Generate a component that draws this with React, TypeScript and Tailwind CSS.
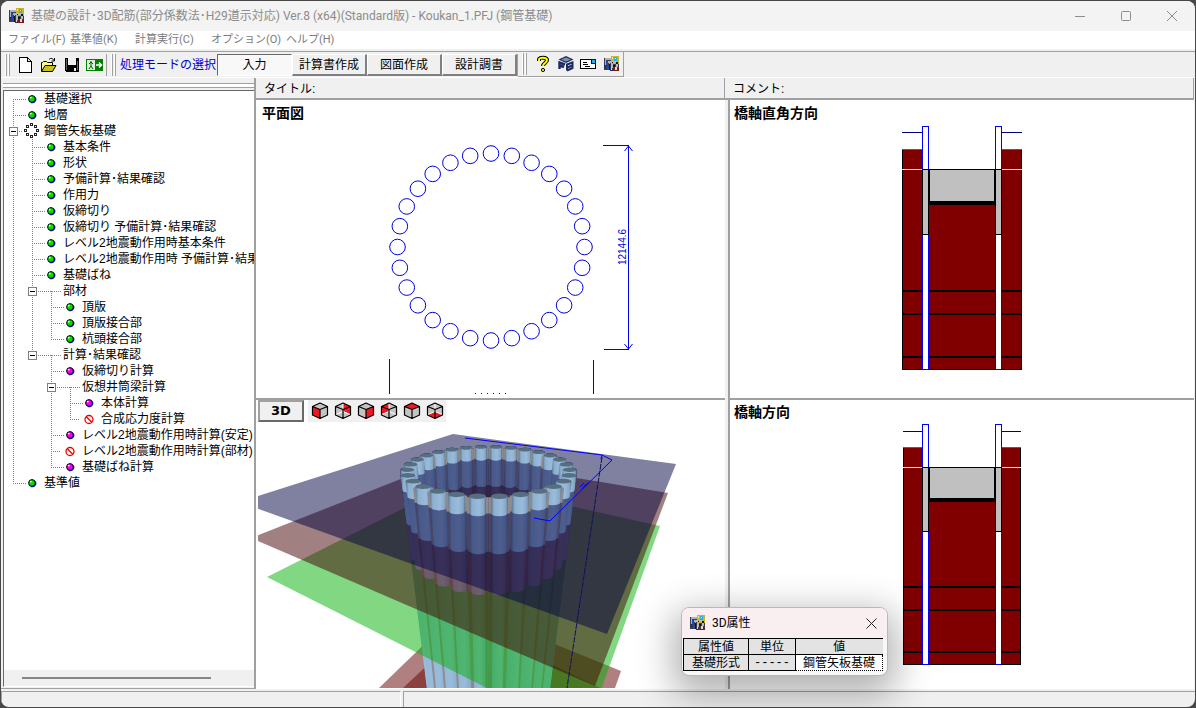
import { ReactNode } from "react";

const FONT = "font-['Liberation_Sans','Noto_Sans_CJK_JP',sans-serif]";
const UI_FONT = "font-[Roboto,'Noto_Sans_CJK_JP',sans-serif]";

type IconKind = "green" | "purple" | "ban" | "ring" | "none";

interface Row {
  guides: string; // one character per tree column
  icon: IconKind;
  label: string;
}

const rows: Row[] = [
  { guides: "r", icon: "green", label: "基礎選択" },
  { guides: "t", icon: "green", label: "地層" },
  { guides: "b", icon: "ring", label: "鋼管矢板基礎" },
  { guides: "|t", icon: "green", label: "基本条件" },
  { guides: "|t", icon: "green", label: "形状" },
  { guides: "|t", icon: "green", label: "予備計算･結果確認" },
  { guides: "|t", icon: "green", label: "作用力" },
  { guides: "|t", icon: "green", label: "仮締切り" },
  { guides: "|t", icon: "green", label: "仮締切り 予備計算･結果確認" },
  { guides: "|t", icon: "green", label: "レベル2地震動作用時基本条件" },
  { guides: "|t", icon: "green", label: "レベル2地震動作用時 予備計算･結果確認" },
  { guides: "|t", icon: "green", label: "基礎ばね" },
  { guides: "|b", icon: "none", label: "部材" },
  { guides: "||t", icon: "green", label: "頂版" },
  { guides: "||t", icon: "green", label: "頂版接合部" },
  { guides: "||l", icon: "green", label: "杭頭接合部" },
  { guides: "|B", icon: "none", label: "計算･結果確認" },
  { guides: "| t", icon: "purple", label: "仮締切り計算" },
  { guides: "| b", icon: "none", label: "仮想井筒梁計算" },
  { guides: "| |t", icon: "purple", label: "本体計算" },
  { guides: "| |l", icon: "ban", label: "合成応力度計算" },
  { guides: "| t", icon: "purple", label: "レベル2地震動作用時計算(安定)" },
  { guides: "| t", icon: "ban", label: "レベル2地震動作用時計算(部材)" },
  { guides: "| l", icon: "purple", label: "基礎ばね計算" },
  { guides: "l", icon: "green", label: "基準値" },
];

// dotted connector lines of one tree column
function Guide({ kind }: { kind: string }) {
  const top = "|tlbB".includes(kind);
  const bottom = "|trb".includes(kind);
  const side = "tlrbB".includes(kind);
  const box = "bB".includes(kind);
  return (
    <svg width="19" height="16" className="shrink-0" shapeRendering="crispEdges">
      <g stroke="#808080" strokeDasharray="1 1">
        {top && <path d="M9.5 0V8" />}
        {bottom && <path d="M9.5 8V16" />}
        {side && <path d="M9 8.5H19" />}
      </g>
      {box && (
        <>
          <rect x="5.5" y="4.5" width="8" height="8" fill="#fff" stroke="#808080" />
          <path d="M7 8.5H12" stroke="#000" />
        </>
      )}
    </svg>
  );
}

function TreeIcon({ kind }: { kind: IconKind }) {
  return (
    <svg width="19" height="16" className="shrink-0">
      {kind === "none" && (
        <path d="M0 8.5H19M9.5 8V16" stroke="#808080" strokeDasharray="1 1" shapeRendering="crispEdges" />
      )}
      {(kind === "green" || kind === "purple") && (
        <>
          <path d="M0 8.5H3" stroke="#808080" strokeDasharray="1 1" shapeRendering="crispEdges" />
          <circle cx="9" cy="8" r="3.4" fill={kind === "green" ? "#00e000" : "#f000f0"} stroke="#000" />
          <path d="M12.4 6.5a3.6 3.6 0 0 1-4.6 4.8" fill="none" stroke="#000090" strokeWidth="1.4" />
          <circle cx="7.8" cy="6.6" r=".9" fill="#fff" />
        </>
      )}
      {kind === "ban" && (
        <g stroke="#f00000" strokeWidth="1.3" fill="none">
          <circle cx="9" cy="8.5" r="4" />
          <path d="M6.2 5.7L11.8 11.3" />
        </g>
      )}
      {kind === "ring" && (
        <g fill="#fff" stroke="#222" shapeRendering="crispEdges">
          {[[8, 1], [12, 3], [14, 7], [12, 11], [8, 13], [4, 11], [2, 7], [4, 3]].map(([x, y]) => (
            <rect key={`${x}-${y}`} x={x - 0.5} y={y - 0.5} width="2" height="2" />
          ))}
        </g>
      )}
    </svg>
  );
}

function AppIcon() {
  return (
    <svg width="16" height="16" viewBox="0 0 16 16" className="shrink-0" shapeRendering="crispEdges">
      <rect x="0" y="2" width="15" height="12" fill="#3c3c44" />
      <path d="M7 0h8v8h-8z" fill="#c8b428" />
      <path d="M10 1h3v4h-3z" fill="#30b0e0" />
      <path d="M11 2h1v1h-1zM8 1h1v2h-1z" fill="#fff080" />
      <path d="M1 2h6v2h-6zM4 5h2v2h-2zM1 4h1v5h-1z" fill="#b0b0b8" />
      <path d="M2 5h2v4h-2zM3 10h2v4h-2z" fill="#1848d0" />
      <path d="M6 5h6v2h-6zM7 8h2v4h-2zM12 8h2v3h-2zM5 7h1v1h-1z" fill="#b8b8c4" />
      <path d="M9 9h2v2h-2zM5 8h1v6h-1zM8 6h1v1h-1zM12 6h2v2h-2z" fill="#111" />
      <path d="M9 12h6v3h-6z" fill="#801818" />
      <path d="M11 11h2v3h-2zM7 12h1v2h-1z" fill="#d8d8e0" />
      <path d="M0 9h2v3h-2zM6 14h3v1h-3z" fill="#203070" />
    </svg>
  );
}

function Grip() {
  return (
    <div className="flex h-[22px] gap-px px-1">
      <div className="w-[2px] border-r border-[#a0a0a0] bg-white" />
      <div className="w-[2px] border-r border-[#a0a0a0] bg-white" />
    </div>
  );
}

function ToolButton({ label, children }: { label: string; children: ReactNode }) {
  return (
    <button aria-label={label} className="flex h-[22px] w-[23px] items-center justify-center">
      {children}
    </button>
  );
}

function ModeButton({ label, active }: { label: string; active?: boolean }) {
  return (
    <button
      className={
        active
          ? "h-[22px] w-[75px] border border-b-white border-l-[#696969] border-r-white border-t-[#696969] bg-[#f8f8f8] leading-5"
          : "h-[22px] w-[75px] border border-b-2 border-r-2 border-b-[#808080] border-l-white border-r-[#808080] border-t-white bg-[#f0f0f0] leading-5"
      }
    >
      {label}
    </button>
  );
}

function Toolbar() {
  return (
    <div className="flex h-[27px] shrink-0 items-center border-b border-t border-b-white border-t-[#a0a0a0] text-[12px]">
      <div className="flex items-center border-r border-[#a0a0a0]">
        <Grip />
        <ToolButton label="新規作成">
          <svg width="16" height="16" fill="#fff" stroke="#000" shapeRendering="crispEdges">
            <path d="M1.5 .5h8l4 4v11h-12zM9.5 .5v4h4" />
          </svg>
        </ToolButton>
        <ToolButton label="開く">
          <svg width="17" height="16" stroke="#000">
            <path d="M1.5 14V5.5h1l1-1h3l1 1h5V8" fill="#ffff80" />
            <path d="M1.5 14.5L5 8.5H16L12.5 14.5z" fill="#c8c020" />
            <path d="M9 2.500c2-2 4-1 5 1M14.500 1v3h-3" fill="none" />
          </svg>
        </ToolButton>
        <ToolButton label="保存">
          <svg width="16" height="16" shapeRendering="crispEdges">
            <path d="M1 1h14v14h-13l-1-1z" fill="#000" />
            <path d="M4 1h8v7h-8zM10 11h2v3h-2z" fill="#f0f0f0" />
            <path d="M2 2h1v11h-1zM13 4h1v9h-1z" fill="#606060" />
          </svg>
        </ToolButton>
        <ToolButton label="終了">
          <svg width="17" height="12">
            <path d="M0 0h17v12h-17z" fill="#008000" />
            <path d="M1 1h8v10h-8z" fill="#d8f0d8" />
            <path d="M5 2v5M3 5l2-2 2 2M3 10l2-3 2 3" stroke="#006000" fill="none" />
            <path d="M10 6h5M13 3.500L15.500 6L13 8.500" stroke="#fff" strokeWidth="1.500" fill="none" />
          </svg>
        </ToolButton>
      </div>
      <div className="flex items-center border-r border-[#a0a0a0]">
        <Grip />
        <span className="w-[97px] whitespace-nowrap text-[#0000c8]">処理モードの選択</span>
        <ModeButton label="入力" active />
        <ModeButton label="計算書作成" />
        <ModeButton label="図面作成" />
        <ModeButton label="設計調書" />
      </div>
      <div className="flex h-[25px] items-center border-b border-r border-[#a0a0a0]">
        <Grip />
        <ToolButton label="ヘルプ">
          <svg width="14" height="18" fill="none">
            <path d="M3 6V4.500C3 2 11 2 11 5c0 3-4 3-4 6" stroke="#000" strokeWidth="4" />
            <path d="M3 6V4.500C3 2 11 2 11 5c0 3-4 3-4 6" stroke="#ffff00" strokeWidth="2" />
            <circle cx="7" cy="15" r="1.600" fill="#ffff00" stroke="#000" />
          </svg>
        </ToolButton>
        <ToolButton label="FORUM8">
          <svg width="16" height="16">
            <path d="M8 0L15.500 3.500L8 7L.5 3.500z" fill="#1c2c60" />
            <path d="M3 3.500L8 1.500L13 3.500L8 5.500z" fill="#8090b0" />
            <path d="M1.500 13V6.500L7 8.500M1.500 9.500L6 11" stroke="#1c2c60" strokeWidth="2.400" fill="none" />
            <path d="M9 14.500V8.500L14.500 6.500V12L9 14.500M9 11.500L14.500 9.500" stroke="#1c2c60" strokeWidth="2" fill="none" />
          </svg>
        </ToolButton>
        <ToolButton label="問い合わせ">
          <svg width="17" height="12" shapeRendering="crispEdges">
            <rect x=".5" y="1.500" width="15" height="9" fill="#fff" stroke="#000" />
            <path d="M3 4.500h4M3 6.500h5M5 8.500h5" stroke="#000" />
            <rect x="11.500" y="1.500" width="4" height="4" fill="#20b0f0" stroke="#0000a0" />
          </svg>
        </ToolButton>
        <ToolButton label="バージョン情報">
          <AppIcon />
        </ToolButton>
      </div>
    </div>
  );
}

function PlanDrawing() {
  const count = 28;
  const piles = Array.from({ length: count }, (_, i) => {
    const a = (i * 2 * Math.PI) / count;
    return { x: 150 + 93.5 * Math.sin(a), y: 107 - 93.5 * Math.cos(a) };
  });
  return (
    <svg width="300" height="254" className="shrink-0" fill="none" stroke="#0000e0">
      {piles.map((p, i) => (
        <circle key={i} cx={p.x} cy={p.y} r="7.8" />
      ))}
      <g shapeRendering="crispEdges">
        <path d="M262 5.500H288M263 209.500H288M287.500 5V210" />
        <path d="M48.500 219V254M252.500 220V254" />
        <path d="M134 253.500H167" strokeDasharray="1 5" />
      </g>
      <path d="M283.500 11L287.500 6L291.500 11M283.500 204L287.500 209L291.500 204" />
      <text
        transform="translate(285 107) rotate(-90)"
        textAnchor="middle"
        fill="#0000e0"
        stroke="none"
        className="font-['Liberation_Sans',sans-serif] text-[10px]"
      >
        12144.6
      </text>
    </svg>
  );
}

interface ElevationProps {
  left: number;
  right: number;
  water: number;
  ground: number;
  bed: number;
  slab: number;
  joint: number;
  layers: number[];
  bottom: number;
}

function Elevation({ left, right, water, ground, bed, slab, joint, layers, bottom }: ElevationProps) {
  return (
    <svg width="120" height="245" className="shrink-0" shapeRendering="crispEdges" fill="none">
      <rect x={left + 0.5} y={ground + 0.5} width={right - left - 1} height={bottom - ground - 1} fill="#800000" stroke="#000" />
      <rect x="20" y={ground} width="80" height={bed - ground} fill="#fff" />
      <path d={`M${left} ${water + 0.5}H20M100 ${water + 0.5}H${right}`} stroke="#000080" />
      <path d={`M${left} ${ground + 0.5}H20M100 ${ground + 0.5}H${right}`} stroke="#e000e0" />
      <path d={`M${left} ${bed + 0.5}H20M100 ${bed + 0.5}H${right}`} stroke="#ffff00" />
      {layers.map(y => (
        <path key={y} d={`M${left} ${y + 1}H${right}`} stroke="#000" strokeWidth="2" />
      ))}
      <rect x="27" y={bed} width="66" height={slab - bed + 4} fill="#000" />
      <rect x="28" y={bed + 1} width="64" height={slab - bed - 1} fill="#c0c0c0" />
      {[20, 93].map(x => (
        <g key={x}>
          <rect x={x + 0.5} y=".5" width="6" height={bottom - 1} fill="#fff" stroke="#0000ff" />
          <rect x={x + 0.5} y={bed + 0.5} width="6" height={joint - bed} fill="#c0c0c0" stroke="#000" />
        </g>
      ))}
    </svg>
  );
}

const CX = 488.5;

// steel pipes sorted from back to front
const pipes = Array.from({ length: 28 }, (_, i) => {
  const a = ((i + 0.5) * 2 * Math.PI) / 28;
  const p = 1 / (1 - 0.189 * Math.sin(a));
  return { x: CX + 80 * Math.cos(a) * p, y: 467 + 23.9 * Math.sin(a) * p, p, w: 6.9 * p };
}).sort((a, b) => a.y - b.y);

function Pipes({ depth }: { depth: number }) {
  return (
    <g>
      {pipes.map((t, i) => {
        const dy = depth * t.p;
        const f = 1 - 0.0014 * dy;
        const bx = CX + (t.x - CX) * f;
        const bw = t.w * f;
        const by = t.y + dy;
        const ry = t.w * 0.32;
        return (
          <g key={i}>
            {Math.abs(t.x - CX) < 70 && (
              <path
                d={`M${t.x - t.w * 1.3} ${t.y + 1}H${t.x + t.w * 1.3}L${bx + bw * 1.3} ${by}H${bx - bw * 1.3}z`}
                fill="#8f8a8c"
              />
            )}
            <path
              d={`M${t.x - t.w} ${t.y}H${t.x + t.w}L${bx + bw} ${by}A${bw} ${ry} 0 0 1 ${bx - bw} ${by}z`}
              fill="url(#pipe)"
            />
            <ellipse cx={t.x} cy={t.y} rx={t.w} ry={ry} fill="#566e80" />
          </g>
        );
      })}
    </g>
  );
}

function Scene3D() {
  return (
    <svg width="467" height="266" viewBox="258 422 467 266" className="shrink-0">
      <defs>
        <linearGradient id="pipe">
          <stop offset="0" stopColor="#5c748c" />
          <stop offset=".18" stopColor="#8cb0d0" />
          <stop offset=".6" stopColor="#9abcdc" />
          <stop offset=".88" stopColor="#86a6c6" />
          <stop offset="1" stopColor="#586e84" />
        </linearGradient>
      </defs>
      <path d="M379 688L470 600L557 645L621 671L615 688z" fill="#b08080" />
      <path d="M403 688L470 625L553 665L600 688z" fill="#8c4040" />
      <Pipes depth={260} />
      <path d="M267 577L458 481L660 526L584 737z" fill="#05af05" fillOpacity=".5" />
      <Pipes depth={78} />
      <path d="M251 538L454 458L668 493L595 686z" fill="#410101" fillOpacity=".5" />
      <Pipes depth={45} />
      <path d="M239 502L453 434L676 464L607 634z" fill="#010141" fillOpacity=".5" />
      <Pipes depth={14} />
      <path d="M602 457L567 688" stroke="#101060" strokeDasharray="6 1" />
      <path d="M465 438L602 455L612 460L550 521L534 518M602 455L601 459" fill="none" stroke="#0000ff" />
      <path d="M580 487l4-4m-2 6l4-5m-1 3l4-5" stroke="#0000ff" />
    </svg>
  );
}

// faces of the cube drawn in red, one entry per view direction
const cubes = [
  { label: "正面", red: "M1.500 4.500L9 7.500V16L1.500 13z", open: false },
  { label: "背面", red: "M9 1L16 4V12L9 9z", open: true },
  { label: "右側面", red: "M9 7.500L16.500 4.500V13L9 16z", open: false },
  { label: "左側面", red: "M9 1L2 4V12L9 9z", open: true },
  { label: "上面", red: "M9 1L16.500 4.500L9 7.500L1.500 4.500z", open: false },
  { label: "下面", red: "M9 9.500L16.500 13L9 16L1.500 13z", open: true },
];

function ViewCube({ red, open }: { red: string; open: boolean }) {
  return (
    <svg width="18" height="18" strokeLinejoin="round">
      <path d="M9 1L16.500 4.500V13L9 16.500L1.500 13V4.500z" fill="#c4c4c4" />
      <path d={red} fill="#f01820" />
      {open && <path d="M9 1V9.500M9 9.500L2 12.500M9 9.500L16 12.500" stroke="#fff" />}
      <path
        d="M9 1L16.500 4.500V13L9 16.500L1.500 13V4.500zM1.500 4.500L9 7.500L16.500 4.500M9 7.500V16.500"
        fill="none"
        stroke="#000"
        strokeWidth="1.200"
      />
    </svg>
  );
}

function AttributeWindow() {
  return (
    <section className="absolute left-[681px] top-[607px] w-[207px] overflow-hidden rounded-lg border border-[#b8b8b8] bg-[#f8f8f8] shadow-[0_12px_36px_8px_rgba(0,0,0,0.3)]">
      <header className={`flex h-[30px] items-center bg-[#f9eff1] pl-2 pr-1.5 text-[12px] ${UI_FONT}`}>
        <AppIcon />
        <h2 className="ml-1.5 flex-1">3D属性</h2>
        <button aria-label="閉じる" className="p-1">
          <svg width="11" height="11" stroke="#222">
            <path d="M.5 .5L10.500 10.500M10.500 .5L.5 10.500" />
          </svg>
        </button>
      </header>
      <div className="px-px pb-1 pr-1">
        <table className="w-full table-fixed border-collapse border-l border-t border-[#696969] text-center text-[12px] leading-[14px]">
          <thead>
            <tr className="bg-[#e3e3e3]">
              <th className="h-4 w-[65px] border border-black p-0 font-normal">属性値</th>
              <th className="w-[47px] border border-black p-0 font-normal">単位</th>
              <th className="border-b border-l border-t border-black p-0 font-normal">値</th>
            </tr>
          </thead>
          <tbody>
            <tr>
              <th className="h-4 border border-black bg-[#e3e3e3] p-0 font-normal">基礎形式</th>
              <td className="border border-black bg-[#e3e3e3] p-0 font-['Liberation_Mono',monospace]">-----</td>
              <td className="border border-dotted border-black bg-white p-0">鋼管矢板基礎</td>
            </tr>
          </tbody>
        </table>
      </div>
    </section>
  );
}

const PANE = "flex min-w-0 flex-col overflow-hidden bg-white";

export default function App() {
  return (
    <div className={`relative flex h-screen flex-col overflow-hidden bg-[#484848] p-px text-[12px] text-black ${FONT}`}>
      <div className="flex min-h-0 flex-1 flex-col overflow-hidden rounded-lg bg-[#f0f0f0]">
        <header className={`flex h-[30px] shrink-0 items-center bg-[#f3f3f3] pl-2 text-[#8c8c8c] ${UI_FONT}`}>
          <AppIcon />
          <h1 className="ml-1.5 flex-1 whitespace-nowrap text-[12px]">
            基礎の設計･3D配筋(部分係数法･H29道示対応) Ver.8 (x64)(Standard版) - Koukan_1.PFJ (鋼管基礎)
          </h1>
          <button aria-label="最小化" className="flex w-[46px] justify-center">
            <svg width="10" height="10" stroke="#8c8c8c"><path d="M0 5.500H10" /></svg>
          </button>
          <button aria-label="最大化" className="flex w-[46px] justify-center">
            <svg width="10" height="10" stroke="#8c8c8c" fill="none"><rect x=".5" y=".5" width="9" height="9" rx="1" /></svg>
          </button>
          <button aria-label="閉じる" className="flex w-[46px] justify-center">
            <svg width="10" height="10" stroke="#8c8c8c"><path d="M0 0L10 10M10 0L0 10" /></svg>
          </button>
        </header>

        <nav className={`flex h-[18px] shrink-0 items-center bg-white pl-[7px] text-[11px] leading-[18px] text-[#7c7c7c] ${UI_FONT}`}>
          <button className="w-[62px] whitespace-nowrap text-left">ファイル(F)</button>
          <button className="w-[65px] whitespace-nowrap text-left">基準値(K)</button>
          <button className="w-[76px] whitespace-nowrap text-left">計算実行(C)</button>
          <button className="w-[75px] whitespace-nowrap text-left">オプション(O)</button>
          <button className="whitespace-nowrap text-left">ヘルプ(H)</button>
        </nav>
        <div className="h-0.5 shrink-0" />
        <Toolbar />

        <main className="flex min-h-0 flex-1">
          {/* tree */}
          <aside className="flex w-[255px] shrink-0 flex-col border-b border-r-2 border-[#a0a0a0] pb-px pl-[2px] pt-[5px]">
            <div className="mb-0.5 h-[5px] shrink-0 border-y border-[#a0a0a0] bg-white" />
            <div className="flex min-h-0 flex-1 flex-col overflow-hidden border-b border-l border-t border-b-white border-l-[#696969] border-t-[#696969] bg-white">
              <ul className="min-h-0 flex-1 overflow-hidden">
                {rows.map((row, i) => (
                  <li key={i} className="flex h-4 items-center whitespace-nowrap leading-4">
                    {row.guides.split("").map((g, n) => (
                      <Guide key={n} kind={g} />
                    ))}
                    <TreeIcon kind={row.icon} />
                    <span className="ml-0.5">{row.label}</span>
                  </li>
                ))}
              </ul>
              <div className="flex h-4 shrink-0 items-center bg-[#f0f0f0] pl-[18px]">
                <div className="h-0.5 w-[189px] bg-[#868686]" />
              </div>
            </div>
          </aside>

          {/* views */}
          <div className="flex min-w-0 flex-1 flex-col pr-px">
            <div className="grid h-[22px] shrink-0 grid-cols-2 border-b-2 border-[#a0a0a0] leading-[22px]">
              <span className="h-5 border-r border-[#a0a0a0] pl-2">タイトル:</span>
              <span className="h-5 border-r border-[#a0a0a0] pl-2">コメント:</span>
            </div>
            <div className="grid min-h-0 flex-1 grid-cols-2">
              <div className="flex min-w-0 flex-col">
                <section className={`h-[298px] pl-[2px] pr-0.5 ${PANE}`}>
                  <h2 className="ml-1 mt-1 h-[18px] shrink-0 text-[14px] font-bold leading-[18px]">平面図</h2>
                  <div className="mt-[18px] flex justify-center">
                    <PlanDrawing />
                  </div>
                </section>
                <section className={`flex-1 border-t-2 border-[#a0a0a0] pl-[2px] ${PANE}`}>
                  <div className="flex h-[22px] shrink-0 items-center">
                    <button className="h-[22px] w-[46px] border-2 border-b-[#696969] border-l-[#a0a0a0] border-r-[#696969] border-t-[#a0a0a0] bg-[#f0f0f0] font-['DejaVu_Sans',sans-serif] text-[13px] font-bold leading-[18px]">
                      3D
                    </button>
                    <div className="ml-1 flex h-[22px] items-center bg-[#f0f0f0]">
                      {cubes.map(c => (
                        <button key={c.label} aria-label={c.label} className="flex w-[23px] justify-center">
                          <ViewCube red={c.red} open={c.open} />
                        </button>
                      ))}
                    </div>
                  </div>
                  <Scene3D />
                </section>
              </div>
              <div className="ml-[3px] flex min-w-0 flex-col border-l-2 border-[#a0a0a0]">
                <section className={`h-[298px] ${PANE}`}>
                  <h2 className="ml-1 mt-1 h-[18px] shrink-0 text-[14px] font-bold leading-[18px]">橋軸直角方向</h2>
                  <div className="mt-1 flex justify-center">
                    <Elevation
                      left={0} right={120} water={6} ground={23} bed={43} slab={75}
                      joint={108} layers={[164, 187, 230]} bottom={244}
                    />
                  </div>
                </section>
                <section className={`flex-1 border-t-2 border-[#a0a0a0] ${PANE}`}>
                  <h2 className="ml-1 mt-[3px] h-[18px] shrink-0 text-[14px] font-bold leading-[18px]">橋軸方向</h2>
                  <div className="mt-[3px] flex justify-center">
                    <Elevation
                      left={1} right={119} water={7} ground={23} bed={43} slab={74}
                      joint={107} layers={[162, 185, 227]} bottom={241}
                    />
                  </div>
                </section>
              </div>
            </div>
          </div>
        </main>

        <footer className="flex h-[18px] shrink-0 gap-0.5 border-t-2 border-[#f0f0f0]">
          <div className="w-[400px] border-l border-r border-t border-l-[#a0a0a0] border-r-white border-t-[#a0a0a0]" />
          <div className="flex-1 border-l border-t border-[#a0a0a0]" />
        </footer>
      </div>
      <AttributeWindow />
    </div>
  );
}
